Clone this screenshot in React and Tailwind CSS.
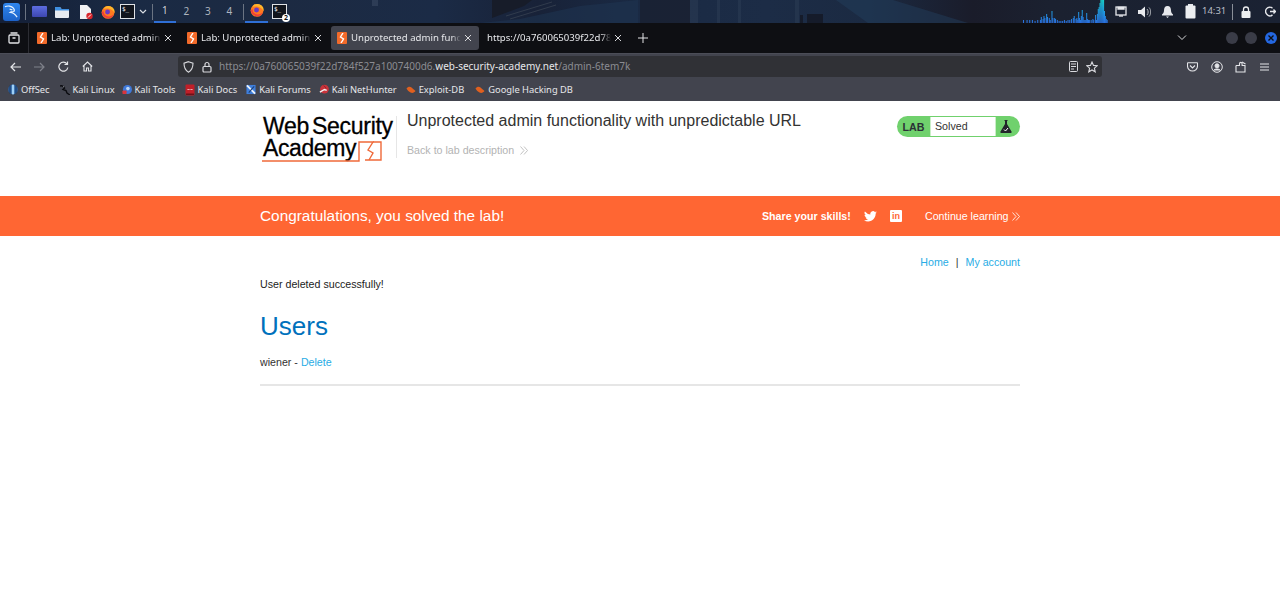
import React from "react";

const ui = { fontFamily: '"Noto Sans", sans-serif' };
const page = { fontFamily: '"Liberation Sans", Arial, sans-serif' };

const specBars = [[1023,3],[1027,3],[1030,3],[1033,3],[1036,2],[1039,3],[1042,3],[1043,6],[1045,4],[1046,7],[1047,5],[1049,9],[1050,6],[1052,5],[1053,3],[1055,12],[1056,5],[1058,5],[1059,4],[1061,3],[1063,2],[1065,2],[1067,2],[1069,3],[1071,2],[1073,3],[1075,3],[1077,4],[1079,5],[1080,7],[1082,4],[1083,5],[1084,3],[1085,11],[1086,5],[1087,3],[1088,7],[1089,13],[1090,6],[1091,3],[1092,3],[1093,3],[1094,10],[1095,4],[1096,3],[1097,3],[1099,3],[1101,4],[1102,3],[1104,8],[1105,3],[1106,9],[1107,14],[1108,16],[1109,20],[1110,23],[1111,23],[1112,23],[1113,23],[1114,12],[1115,7],[1116,4],[1117,3]];

function Wallpaper() {
  return (
    <svg className="absolute inset-0" width="1280" height="23" viewBox="0 0 1280 23">
      <defs>
        <linearGradient id="wp" x1="0" x2="1" y1="0" y2="0">
          <stop offset="0" stopColor="#141f36" />
          <stop offset="0.1" stopColor="#1a2a44" />
          <stop offset="0.22" stopColor="#1c2a42" />
          <stop offset="0.34" stopColor="#1b2b46" />
          <stop offset="0.42" stopColor="#182238" />
          <stop offset="0.5" stopColor="#1a2a44" />
          <stop offset="0.6" stopColor="#1c2c46" />
          <stop offset="0.68" stopColor="#1b2a42" />
          <stop offset="0.76" stopColor="#1a1c2a" />
          <stop offset="0.82" stopColor="#1b2130" />
          <stop offset="1" stopColor="#1a2233" />
        </linearGradient>
        <linearGradient id="sp" gradientUnits="userSpaceOnUse" x1="0" x2="0" y1="0" y2="23">
          <stop offset="0" stopColor="#18dcd6" />
          <stop offset="0.5" stopColor="#1f9fe6" />
          <stop offset="1" stopColor="#2a6fe0" />
        </linearGradient>
      </defs>
      <rect width="1280" height="23" fill="url(#wp)" />
      <path d="M372 0h6v6h-6z" fill="#3b4a62" opacity="0.6" />
      <path d="M492 0h40l-8 6-32 12z" fill="#171c29" />
      <path d="M506 16l46-14M510 19l46-14" stroke="#4b5560" strokeWidth="0.7" opacity="0.7" />
      <path d="M480 23l40-4 60-13 58-6v23z" fill="#1e3350" opacity="0.6" />
      <path d="M640 0h50v23h-50z" fill="#191f2e" opacity="0.7" />
      <path d="M690 0h8v23h-8zM717 0h3v23h-3zM738 0h3v23h-3zM795 0h4v23h-4z" fill="#46566c" opacity="0.22" />
      <path d="M800 23v-8h3v8zM807 23v-9h16v9z" fill="#121620" opacity="0.7" />
      <path d="M836 0h57l75 23h-100z" fill="#23405f" opacity="0.45" />
      {specBars.map(([x, h]) => (
        <rect key={x} x={1023 + (x - 1023) * 0.89} y={23 - h} width="1" height={h} fill="url(#sp)" />
      ))}
    </svg>
  );
}

function KaliLogo() {
  return (
    <div className="w-[17px] h-[18px] rounded-[3px] bg-gradient-to-b from-[#2f86ee] to-[#1c62c8] flex items-center justify-center">
      <svg width="15" height="15" viewBox="0 0 16 16" fill="none" stroke="#e6f2ff" strokeWidth="1.3">
        <path d="M1 3c3-1.5 7-1 9 1.5 1.2 1.500 1 3 .5 3.500-1.500 0-3 0-4 1 2.500 0 5 1.500 7.500 5" />
        <path d="M6 5.500c1 .2 2 .4 3 1" />
      </svg>
    </div>
  );
}

function Terminal({ className = "" }) {
  return (
    <div className={`w-[15px] h-[15px] bg-[#11151d] border border-[#dfe2e6] text-[6px] leading-[8px] text-white pl-px ${className}`} style={{ fontFamily: '"DejaVu Sans Mono", monospace' }}>
      $_
    </div>
  );
}

function Firefox({ size = 14 }) {
  return (
    <svg width={size} height={size} viewBox="0 0 16 16">
      <circle cx="8" cy="8.500" r="7.300" fill="#ff7a1f" />
      <path d="M3 4.500C4 1 9 0 13 2.500c2 1.500 3 4 2.500 7C14 5 8 3 3 4.500z" fill="#ffb52a" />
      <circle cx="7.500" cy="8" r="2.800" fill="#6a3bc4" />
      <path d="M.8 8c.5 5 5 7.800 9.200 6.800 2-.5 4-2 4.800-4.500-2.300 3-6.300 3.500-8.800 2C4 11 3 10 3 7z" fill="#ef3f3a" />
    </svg>
  );
}

function PanelTop() {
  return (
    <div className="relative h-[23px] flex items-center text-[#d9dde3]">
      <Wallpaper />
      <div className="relative flex items-center h-[23px] w-full" style={ui}>
        <div className="ml-[3px]"><KaliLogo /></div>
        <div className="w-px h-[16px] bg-[#6b7482] ml-[5px]" />
        <div className="ml-[6px] w-[15px] h-[11px] bg-gradient-to-b from-[#5d6de0] to-[#3d47b0] rounded-[1px]" />
        <svg className="ml-[7px]" width="16" height="14" viewBox="0 0 16 14"><path d="M1 3a1 1 0 011-1h4l1.500 2H15v8a1 1 0 01-1 1H2a1 1 0 01-1-1z" fill="#e6eaef" /><path d="M1 2h5l1.500 2H15v1.500H1z" fill="#3f8fe0" /></svg>
        <svg className="ml-[9px]" width="14" height="16" viewBox="0 0 14 16"><path d="M1 1h7l4 4v10H1z" fill="#f1f2f4" /><circle cx="10.500" cy="12" r="3.200" fill="#d8262c" /><path d="M9 13.500l3-3" stroke="#fff" /></svg>
        <div className="ml-[8px]"><Firefox /></div>
        <Terminal className="ml-[5px]" />
        <svg className="ml-[4px]" width="8" height="6" viewBox="0 0 8 6" fill="none" stroke="#d9dde3" strokeWidth="1.200"><path d="M1 1l3 3 3-3" /></svg>
        <div className="w-px h-[16px] bg-[#6b7482] ml-[5px]" />
        <div className="flex items-center h-[23px] ml-[1px] text-[10px]">
          <span className="w-[21.500px] h-[23px] flex items-center justify-center border-b-2 border-[#2f6fd6] text-[#cfd3da]">1</span>
          <span className="w-[21.500px] flex items-center justify-center text-[#aeb5bf]">2</span>
          <span className="w-[21.500px] flex items-center justify-center text-[#aeb5bf]">3</span>
          <span className="w-[21.500px] flex items-center justify-center text-[#aeb5bf]">4</span>
        </div>
        <div className="w-px h-[16px] bg-[#6b7482] ml-[3px]" />
        <div className="ml-px w-[23px] h-[23px] flex items-center justify-center border-b-2 border-[#2f6fd6] pb-[2px]"><Firefox /></div>
        <div className="relative ml-[4px]">
          <Terminal />
          <span className="absolute -right-[3px] -bottom-[3px] w-[8px] h-[8px] rounded-full bg-white text-[#111] text-[7px] leading-[8px] text-center font-bold">2</span>
        </div>
        <div className="flex-1" />
        <svg width="12" height="11" viewBox="0 0 12 11" fill="none" stroke="#e6e8ec" strokeWidth="1.300"><rect x="1" y="1" width="10" height="8" /><path d="M3 1.500h6V3H3z" fill="#e6e8ec" /><path d="M4 10h4" /></svg>
        <svg className="ml-[11px]" width="13" height="12" viewBox="0 0 13 12"><path d="M0 4h3l4-3.500v11L3 8H0z" fill="#e6e8ec" /><path d="M9 3c1.500 1.500 1.500 4.500 0 6M11 1.500c2.300 2.300 2.300 6.700 0 9" stroke="#aeb2b8" fill="none" /></svg>
        <svg className="ml-[11px]" width="11" height="12" viewBox="0 0 11 12"><path d="M5.500 0c2.500 0 3.500 2 3.500 4.500 0 2 1 3 2 4v1H0v-1c1-1 2-2 2-4C2 2 3 0 5.500 0z" fill="#e6e8ec" /><path d="M4 10.500h3l-1.500 1.500z" fill="#e6e8ec" /></svg>
        <svg className="ml-[12px]" width="11" height="15" viewBox="0 0 11 15"><rect x="3" y="0" width="5" height="2" fill="#e6e8ec" /><rect x="0.500" y="1.500" width="10" height="13" rx="1" fill="#eceef0" /></svg>
        <span className="ml-[6px] text-[9.500px] text-[#b9bec6] w-[24px]">14:31</span>
        <div className="w-px h-[16px] bg-[#8a8f98] ml-[6px]" />
        <svg className="ml-[8px]" width="10" height="12" viewBox="0 0 10 12"><rect x="0.500" y="5" width="9" height="7" rx="1" fill="#eceef0" /><path d="M2.500 5V3.500a2.500 2.500 0 015 0V5" stroke="#eceef0" strokeWidth="1.300" fill="none" /></svg>
        <svg className="ml-[14px] mr-[4px]" width="11" height="11" viewBox="0 0 11 11" fill="none" stroke="#e6e8ec" strokeWidth="1.400"><path d="M7.500 2.200A4 4 0 102 8.500a4 4 0 005.500.4" /><path d="M5 5.500h5.500M8.500 3.500l2 2-2 2" /></svg>
      </div>
    </div>
  );
}

function Favicon() {
  return (
    <span className="w-[10px] h-[12px] bg-[#f26a2a] flex items-center justify-center shrink-0 rounded-[1px]">
      <svg width="8" height="10" viewBox="0 0 8 10" fill="none" stroke="#fff" strokeWidth="1.400"><path d="M5 0L2.500 4 5.500 6 3 10" /></svg>
    </span>
  );
}

function Tab({ title, active, icon = true }) {
  return (
    <div className={`w-[148px] h-[24px] flex items-center shrink-0 rounded-[3px] pl-[6px] pr-[7px] ${active ? "bg-[#42444e]" : ""}`}>
      {icon && <span className="mr-[4px] flex"><Favicon /></span>}
      <span
        className="flex-1 overflow-hidden whitespace-nowrap text-[9.600px] leading-[14px] text-[#e6e7ea]"
        style={{ ...ui, maskImage: "linear-gradient(to left, transparent 0, black 10px)" }}
      >
        {title}
      </span>
      <svg className="ml-[3px] shrink-0" width="8" height="8" viewBox="0 0 8 8" stroke="#d8d9dc" strokeWidth="1"><path d="M1 1l6 6M7 1L1 7" /></svg>
    </div>
  );
}

function TabStrip() {
  return (
    <div className="h-[30px] bg-[#0e0f13] flex items-center">
      <div className="w-[28px] flex justify-center">
        <svg width="12" height="12" viewBox="0 0 12 12" fill="none" stroke="#e4e5e8" strokeWidth="1.300"><rect x="1" y="3" width="10" height="8" rx="1" /><path d="M2.500 1h7M4.500 6h3" /></svg>
      </div>
      <div className="w-px h-[30px] bg-[#2c2d33]" />
      <div className="flex items-center ml-[2px] gap-[2px]">
        <Tab title="Lab: Unprotected admin functionality" />
        <Tab title="Lab: Unprotected admin functionality" />
        <Tab title="Unprotected admin functionality" active />
        <Tab title="https://0a760065039f22d784f527a1007400d6" icon={false} />
      </div>
      <svg className="ml-[9px]" width="10" height="10" viewBox="0 0 10 10" stroke="#e4e5e8" strokeWidth="1"><path d="M5 0v10M0 5h10" /></svg>
      <div className="flex-1" />
      <svg width="10" height="6" viewBox="0 0 10 6" fill="none" stroke="#d8d9dc" strokeWidth="1"><path d="M1 .5l4 4 4-4" /></svg>
      <div className="ml-[39px] w-[12px] h-[12px] rounded-full bg-[#3a3c47]" />
      <div className="ml-[7px] w-[12px] h-[12px] rounded-full bg-[#3a3c47]" />
      <div className="ml-[8px] mr-[3px] w-[12px] h-[12px] rounded-full bg-[#2467e0] flex items-center justify-center">
        <svg width="6" height="6" viewBox="0 0 6 6" stroke="#0e0f13" strokeWidth="1.300"><path d="M.5.500l5 5M5.500.500l-5 5" /></svg>
      </div>
    </div>
  );
}

function NavBar() {
  return (
    <div className="h-[26px] bg-[#42444e] border-t border-[#4b4d57] flex items-center">
      <div className="w-[178px] flex items-center pl-[10px] gap-[13px] shrink-0">
        <svg width="11" height="10" viewBox="0 0 11 10" fill="none" stroke="#e4e5e8" strokeWidth="1.200"><path d="M11 5H1M5 1L1 5l4 4" /></svg>
        <svg width="11" height="10" viewBox="0 0 11 10" fill="none" stroke="#7f818a" strokeWidth="1.200"><path d="M0 5h10M6 1l4 4-4 4" /></svg>
        <svg width="11" height="11" viewBox="0 0 11 11" fill="none" stroke="#e4e5e8" strokeWidth="1.200"><path d="M9.800 6.500A4.500 4.500 0 119 3M9.500 .5V3.500H6.500" /></svg>
        <svg width="11" height="11" viewBox="0 0 11 11" fill="none" stroke="#e4e5e8" strokeWidth="1.100"><path d="M.8 5.500L5.500 1l4.700 4.500M2 4.500V10h2.500V7h2v3H9V4.500" /></svg>
      </div>
      <div className="w-[924px] h-[21px] bg-[#303136] rounded-[3px] flex items-center shrink-0">
        <svg className="ml-[5px]" width="11" height="12" viewBox="0 0 11 12" fill="none" stroke="#d9dade" strokeWidth="1.100"><path d="M5.500 .7l4.500 1.500c0 4-1 7-4.500 9C2 9.200 1 6.200 1 2.200z" /></svg>
        <svg className="ml-[8px]" width="10" height="12" viewBox="0 0 10 12" fill="none" stroke="#d9dade" strokeWidth="1.200"><rect x="1" y="5.500" width="8" height="5.500" rx="1" /><path d="M3 5.500V3.500a2 2 0 014 0v2" /></svg>
        <span className="ml-[7px] text-[10px] text-[#8b8c92] whitespace-nowrap" style={ui}>
          https://0a760065039f22d784f527a1007400d6.<span className="text-[#e7e8ea]">web-security-academy.net</span>/admin-6tem7k
        </span>
        <div className="flex-1" />
        <svg width="9" height="11" viewBox="0 0 9 11" fill="none" stroke="#d9dade"><rect x=".5" y=".5" width="8" height="10" rx="1" /><path d="M2 3h5M2 5.500h5M2 8h3" /></svg>
        <svg className="ml-[8px] mr-[4px]" width="12" height="12" viewBox="0 0 12 12" fill="none" stroke="#d9dade" strokeWidth="1.100"><path d="M6 1l1.500 3.400 3.700.4-2.800 2.400.8 3.600L6 9l-3.200 1.800.8-3.600L.8 4.800l3.700-.4z" /></svg>
      </div>
      <div className="flex-1" />
      <svg className="ml-[1px]" width="11" height="10" viewBox="0 0 11 10" fill="none" stroke="#e4e5e8" strokeWidth="1.100"><path d="M1 .7h9a.5.500 0 01.5.5V4a5 5 0 01-10 0V1.200A.5.500 0 011 .7zM3 3.500L5.500 6 8 3.500" /></svg>
      <svg className="ml-[13px]" width="12" height="12" viewBox="0 0 12 12" fill="none" stroke="#e4e5e8"><circle cx="6" cy="6" r="5.300" /><circle cx="6" cy="4.800" r="2" fill="#e4e5e8" /><path d="M2.500 9.500c1-2 6-2 7 0" fill="#e4e5e8" /></svg>
      <svg className="ml-[12px]" width="12" height="12" viewBox="0 0 12 12" fill="none" stroke="#e4e5e8" strokeWidth="1.100"><path d="M1 4.500h3.500V2.700a1.300 1.300 0 012.600 0V4.500H10V7.500M10 7.500V11H1V4.500" /><path d="M7 1l3.500 2" /></svg>
      <svg className="ml-[13px] mr-[11px]" width="9" height="8" viewBox="0 0 9 8" stroke="#e4e5e8"><path d="M0 1h9M0 4h9M0 7h9" /></svg>
    </div>
  );
}

const bmIcons = {
  offsec: (
    <svg width="10" height="11" viewBox="0 0 10 11"><ellipse cx="5" cy="5.500" rx="4.800" ry="5" fill="#2c5f9e" /><rect x="3.800" y="0.500" width="2.400" height="10" rx="1.200" fill="#9fd0f5" /><rect x="1.600" y="1.500" width="0.800" height="8" fill="#16335a" /><rect x="7.600" y="1.500" width="0.800" height="8" fill="#16335a" /></svg>
  ),
  linux: (
    <svg width="10" height="10" viewBox="0 0 10 10" fill="none"><path d="M0 1c2-.7 3.500 0 4.500 2L3 4.500 6 5.500 7 8l3 2" stroke="#0b0c10" strokeWidth="1.400" /><path d="M3 1.500l1 .5" stroke="#c8c9cc" strokeWidth="0.700" /></svg>
  ),
  tools: (
    <svg width="11" height="11" viewBox="0 0 11 11"><circle cx="6" cy="5.500" r="5" fill="#3f78d8" /><circle cx="6.500" cy="4.500" r="2" fill="#bcd6f5" /><rect x="0.500" y="6.500" width="4.500" height="4" rx="1" fill="#d8353c" /></svg>
  ),
  docs: (
    <svg width="10" height="12" viewBox="0 0 10 12"><rect x="0.500" y="0.500" width="9" height="11" rx="1" fill="#c01f28" /><path d="M2.500 6l1-1 1 1M5.500 6l1-1 1 1" stroke="#fff" strokeWidth="0.800" fill="none" /><rect x="1" y="9.500" width="8" height="1.500" fill="#6e1218" /></svg>
  ),
  forums: (
    <svg width="11" height="11" viewBox="0 0 11 11"><rect x="0.500" y="0.500" width="10" height="10" fill="#3f7fdc" /><path d="M1 1l9 9" stroke="#eef4fb" strokeWidth="2" /><path d="M9 2L3 9" stroke="#1c3f78" strokeWidth="1.200" /></svg>
  ),
  hunter: (
    <svg width="11" height="11" viewBox="0 0 11 11"><circle cx="6" cy="5" r="4.800" fill="#c9333b" /><path d="M1 8.500l5-3 2.500 1" stroke="#f3f3f4" strokeWidth="1.600" fill="none" /><path d="M5 1l3 3" stroke="#8a1f26" /></svg>
  ),
  exploit: (
    <svg width="10" height="8" viewBox="0 0 10 8"><path d="M.5 2.500C2 .5 4 .5 5.500 1.500L9.500 5c-1 1.500-3 2.500-5 1.500C3 5.500 1.500 4.500.5 2.500z" fill="#e0601f" /></svg>
  ),
};

function Bookmark({ icon, label, className = "" }) {
  return (
    <span className={`flex items-center whitespace-nowrap ${className}`}>
      <span className="w-[10px] h-[12px] mr-[3px] shrink-0 flex items-center justify-center">{bmIcons[icon]}</span>
      <span>{label}</span>
    </span>
  );
}

function Bookmarks() {
  return (
    <div className="h-[22px] bg-[#42444e] flex items-center pl-[8px] text-[9.330px] text-[#e6e7ea]" style={ui}>
      <Bookmark icon="offsec" label="OffSec" />
      <Bookmark icon="linux" label="Kali Linux" className="ml-[10px]" />
      <Bookmark icon="tools" label="Kali Tools" className="ml-[7px]" />
      <Bookmark icon="docs" label="Kali Docs" className="ml-[9px]" />
      <Bookmark icon="forums" label="Kali Forums" className="ml-[9px]" />
      <Bookmark icon="hunter" label="Kali NetHunter" className="ml-[8px]" />
      <Bookmark icon="exploit" label="Exploit-DB" className="ml-[9px]" />
      <Bookmark icon="exploit" label="Google Hacking DB" className="ml-[11px]" />
    </div>
  );
}

function Logo() {
  return (
    <div className="relative w-[134px] h-[50px] shrink-0 text-black [-webkit-text-stroke:0.3px_#000]" style={page}>
      <div className="pl-px text-[23px] leading-[22px] tracking-[-0.3px] [word-spacing:-3px] whitespace-nowrap">Web Security</div>
      <div className="pl-px text-[23px] leading-[22px] tracking-[-0.4px] whitespace-nowrap">Academy</div>
      <svg className="absolute left-0 top-0" width="134" height="50" viewBox="0 0 134 50" fill="none" stroke="#ef6a3a">
        <path d="M0 46h97V27h14l-5 8 5 3-4 7" strokeWidth="1.400" />
        <path d="M111 27h8v18h-16" strokeWidth="1.400" />
      </svg>
    </div>
  );
}

function Flask() {
  return (
    <svg width="12" height="13" viewBox="0 0 12 13">
      <path d="M4.500 0h3v1h-.5v3l4.500 7.500c.4.800 0 1.500-1 1.500H1.500c-1 0-1.400-.7-1-1.500L5 4V1h-.5z" fill="#22262a" />
      <path d="M4 9.500l1.500 1.500L8 8" stroke="#fff" fill="none" />
    </svg>
  );
}

function Chevrons({ color = "#b3b3b3" }) {
  return (
    <svg width="8" height="9" viewBox="0 0 8 9" fill="none" stroke={color} strokeWidth="0.8"><path d="M.5.500l3.500 4-3.500 4M4 .500l3.500 4-3.500 4" /></svg>
  );
}

function LabHeader() {
  return (
    <div className="w-[760px] mx-auto flex h-[95px] relative">
      <div className="ml-[2px] mt-[14px]"><Logo /></div>
      <div className="w-px h-[42px] bg-[#e6e6e6] mt-[15px]" />
      <div className="ml-[10px] flex-1">
        <div className="text-[16px] leading-[20px] mt-[10px] text-[#333332] whitespace-nowrap">Unprotected admin functionality with unpredictable URL</div>
        <div className="flex items-center mt-[12px] text-[10.670px] leading-[14px] text-[#b3b3b3]">
          Back to lab description<span className="ml-[6px] flex"><Chevrons /></span>
        </div>
      </div>
      <div className="absolute right-0 top-[15px] w-[123px] h-[21px] bg-[#70d16d] rounded-full flex items-center overflow-hidden">
        <span className="w-[33px] text-center text-[10.670px] font-bold text-[#2b3036]">LAB</span>
        <span className="w-[66px] h-[19px] bg-white border border-[#c9eec7] border-y-0 text-[10.670px] leading-[19px] pl-[4px] text-[#333332]">Solved</span>
        <span className="flex-1 h-[21px] flex items-center pl-[4px]"><Flask /></span>
      </div>
    </div>
  );
}

function Banner() {
  return (
    <div className="h-[40px] bg-[#ff6633]">
      <div className="w-[760px] mx-auto h-full flex items-center text-white">
        <span className="text-[15.370px]">Congratulations, you solved the lab!</span>
        <div className="flex-1" />
        <span className="text-[10.670px] font-bold w-[90px] whitespace-nowrap">Share your skills!</span>
        <svg className="ml-[12px]" width="13" height="11" viewBox="0 0 24 20" fill="#fff"><path d="M24 2.400a9.800 9.800 0 01-2.800.8A4.900 4.900 0 0023.300.500a9.800 9.800 0 01-3.100 1.200 4.900 4.900 0 00-8.400 4.500A13.900 13.900 0 011.700.900a4.900 4.900 0 001.500 6.500 4.900 4.900 0 01-2.200-.6c0 2.400 1.700 4.400 3.900 4.900a4.900 4.900 0 01-2.200.1 4.900 4.900 0 004.600 3.400A9.900 9.900 0 010 16.700 13.900 13.900 0 007.500 19c9.100 0 14.300-7.700 14-14.600A10 10 0 0024 2.400z" /></svg>
        <span className="ml-[13px] w-[12px] h-[12px] rounded-[1px] bg-white text-[#ff6633] flex items-center justify-center text-[9px] leading-none font-bold">in</span>
        <span className="ml-[23px] w-[84px] text-[10.670px] mr-[3px] whitespace-nowrap">Continue learning</span>
        <Chevrons color="#ffffff" />
      </div>
    </div>
  );
}

function Content() {
  return (
    <div className="w-[760px] mx-auto text-[10.670px] text-[#333332]">
      <div className="h-[16px] mt-[18px] flex justify-end items-center">
        <span className="text-[#29ace5]">Home</span>
        <span className="mx-[7px] text-[#333332]">|</span>
        <span className="text-[#29ace5]">My account</span>
      </div>
      <p className="mt-[7px] leading-[14px] text-[#1b1b1b]">User deleted successfully!</p>
      <h1 className="text-[26px] leading-[30px] mt-[20px] text-[#0071bc]">Users</h1>
      <p className="mt-[14px] leading-[14px]">wiener - <span className="text-[#29ace5]">Delete</span></p>
      <div className="mt-[15px] h-[2px] bg-[#e6e6e6]" />
    </div>
  );
}

export default function App() {
  return (
    <div className="w-[1280px] h-[614px] overflow-hidden bg-white">
      <PanelTop />
      <TabStrip />
      <NavBar />
      <Bookmarks />
      <div style={page}>
        <LabHeader />
        <Banner />
        <Content />
      </div>
    </div>
  );
}
